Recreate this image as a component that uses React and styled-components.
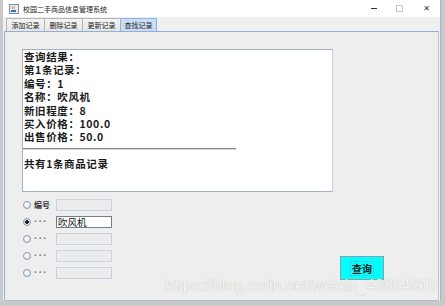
import React from 'react';
import styled, { createGlobalStyle } from 'styled-components';

const GlobalStyle = createGlobalStyle`
  html, body {
    margin: 0;
    padding: 0;
    background: #c9c9c9;
    font-family: "Noto Sans CJK SC", "Liberation Sans", sans-serif;
  }
  body {
    width: 445px;
    height: 306px;
    overflow: hidden;
  }
`;

const resultLines = [
  '查询结果：',
  '第1条记录：',
  '编号：1',
  '名称：吹风机',
  '新旧程度：8',
  '买入价格：100.0',
  '出售价格：50.0',
];

const options = [
  { label: '编号', value: '', checked: false },
  { label: '···', value: '吹风机', checked: true },
  { label: '···', value: '', checked: false },
  { label: '···', value: '', checked: false },
  { label: '···', value: '', checked: false },
];

const tabs = ['添加记录', '删除记录', '更新记录', '查找记录'];

function JavaIcon() {
  return (
    <svg width="10" height="10" viewBox="0 0 10 10">
      <rect x="0.5" y="0.5" width="9" height="9" fill="#e9eef5" stroke="#7d8ea3" />
      <path d="M3 2 C4 3 2 4 4 5 M5 2 C6 3 4 4 6 5" stroke="#d8701c" fill="none" strokeWidth="0.8" />
      <path d="M2 6 H7 V8 H2 Z" fill="#3c6fb0" />
    </svg>
  );
}

export default function App() {
  return (
    <>
      <GlobalStyle />
      <Window>
        <TitleBar>
          <TitleIcon><JavaIcon /></TitleIcon>
          <Title>校园二手商品信息管理系统</Title>
          <Controls>
            <Minimize />
            <Maximize />
            <Close>✕</Close>
          </Controls>
        </TitleBar>

        <TabStrip>
          {tabs.map((t, i) => (
            <Tab key={t} active={i === 3}>{t}</Tab>
          ))}
        </TabStrip>

        <TabPanel>
          <ResultBox>
            {resultLines.map((line) => (
              <ResultLine key={line}>{line}</ResultLine>
            ))}
            <Separator />
            <ResultLine>共有1条商品记录</ResultLine>
          </ResultBox>

          <Bottom>
            <OptionList>
              {options.map((o, i) => (
                <OptionRow key={i}>
                  <Radio checked={o.checked} />
                  <OptionLabel dots={o.label === '···'}>{o.label}</OptionLabel>
                  <Field active={o.checked}>{o.value}</Field>
                </OptionRow>
              ))}
            </OptionList>
            <QueryButton>
              <FocusRing>查询</FocusRing>
            </QueryButton>
          </Bottom>

          <Watermark>https://blog.csdn.net/weixin_43894818</Watermark>
        </TabPanel>
      </Window>
    </>
  );
}

// window frame
const Window = styled.div`
  margin-left: 3px;
  width: 438px;
  height: 301px;
  background: #f0f0f0;
  display: flex;
  flex-direction: column;
  box-sizing: border-box;
  padding: 0 1px 0 1px;
  border-right: 1px solid #a8b4c4;
`;

const TitleBar = styled.div`
  height: 17px;
  margin: 0 -1px;
  background: #ffffff;
  display: flex;
  align-items: center;
  padding-left: 6px;
`;

const TitleIcon = styled.div`
  width: 10px;
  height: 10px;
  display: flex;
`;

const Title = styled.span`
  margin-left: 4px;
  font-size: 7px;
  color: #222;
`;

const Controls = styled.div`
  margin-left: auto;
  display: flex;
  align-items: center;
  height: 100%;
`;

const Minimize = styled.div`
  width: 6px;
  height: 1px;
  background: #333;
  margin-right: 19px;
`;

const Maximize = styled.div`
  width: 5px;
  height: 5px;
  border: 1px solid #c8c8c8;
  margin-right: 20px;
`;

const Close = styled.span`
  font-family: "DejaVu Sans", sans-serif;
  font-size: 8px;
  color: #333;
  margin-right: 10px;
`;

// tabs
const TabStrip = styled.div`
  height: 14px;
  display: flex;
  align-items: flex-end;
  padding-left: 2px;
`;

const Tab = styled.div`
  height: 13px;
  box-sizing: border-box;
  width: ${(p) => (p.active ? '37px' : '39px')};
  margin-right: -1px;
  display: flex;
  align-items: center;
  justify-content: center;
  font-size: 7px;
  color: #222;
  border: 1px solid ${(p) => (p.active ? '#8db2e3' : '#b4b4b4')};
  border-bottom: none;
  background: ${(p) => (p.active ? '#c9ddf3' : 'linear-gradient(#f4f4f4, #e6e6e6)')};
`;

const TabPanel = styled.div`
  position: relative;
  flex: 1;
  background: #eeeeee;
  border: 1px solid #90b0d8;
  border-right-color: #b9c8da;
  border-bottom-color: #b0bccc;
  padding: 17px 0 0 17px;
  display: flex;
  flex-direction: column;
`;

// result text area
const ResultBox = styled.div`
  width: 311px;
  height: 143px;
  box-sizing: border-box;
  background: #ffffff;
  border: 1px solid #a3b0c0;
  border-right-color: #c7d0dc;
  padding: 0 0 0 1px;
  font-family: "Noto Sans CJK SC", "Liberation Sans", sans-serif;
  font-weight: 700;
  font-size: 10.5px;
  color: #1a1a1a;
`;

const ResultLine = styled.div`
  height: 13.4px;
  line-height: 13.4px;
  white-space: nowrap;
  letter-spacing: 0.6px;
`;

const Separator = styled.div`
  width: 212px;
  height: 13.4px;
  box-sizing: border-box;
  position: relative;
  &::after {
    content: '';
    position: absolute;
    left: -1px;
    right: 0;
    top: 4px;
    border-top: 1px solid #8a8a8a;
    border-bottom: 1px solid #d8d8d8;
  }
`;

// options and button
const Bottom = styled.div`
  display: flex;
  align-items: flex-end;
  margin-top: 4px;
`;

const OptionList = styled.div`
  display: flex;
  flex-direction: column;
`;

const OptionRow = styled.div`
  height: 17px;
  display: flex;
  align-items: center;
`;

const Radio = styled.div`
  width: 8px;
  height: 8px;
  margin-left: 1px;
  box-sizing: border-box;
  border-radius: 50%;
  border: 1px solid #8797ab;
  background: ${(p) =>
    p.checked
      ? 'radial-gradient(circle, #222 0 1.6px, #e4e8ee 2px)'
      : 'radial-gradient(circle at 40% 35%, #ffffff, #d7dde6)'};
`;

const OptionLabel = styled.span`
  width: 22px;
  margin-left: 3px;
  font-family: ${(p) => (p.dots ? '"Liberation Sans", sans-serif' : '"Noto Sans CJK SC", sans-serif')};
  font-size: ${(p) => (p.dots ? '10px' : '8px')};
  font-weight: 700;
  color: ${(p) => (p.dots ? '#7a7a7a' : '#333')};
  letter-spacing: ${(p) => (p.dots ? '1.3px' : '0')};
  line-height: 1;
`;

const Field = styled.div`
  width: 56px;
  height: 12px;
  box-sizing: border-box;
  border: 1px solid ${(p) => (p.active ? '#6f7f8f' : '#c6d3e2')};
  background: ${(p) => (p.active ? '#ffffff' : '#ececec')};
  font-size: 9.5px;
  line-height: 10px;
  padding-left: 1px;
  color: #111;
  white-space: nowrap;
`;

const QueryButton = styled.div`
  margin-left: 228px;
  margin-bottom: 1px;
  width: 44px;
  height: 24px;
  box-sizing: border-box;
  background: #00ffff;
  border: 1px solid #8aa0ac;
  display: flex;
  align-items: center;
  justify-content: center;
`;

const FocusRing = styled.span`
  font-size: 10px;
  font-weight: 700;
  color: #1a1a1a;
  line-height: 11px;
  padding: 1px 1px;
  outline: 1px dotted #7aa6b2;
`;

const Watermark = styled.div`
  position: absolute;
  left: 160px;
  top: 245px;
  font-family: "Liberation Sans", Arial, sans-serif;
  font-size: 16px;
  color: rgba(255, 255, 255, 0.9);
  text-shadow: 0 0 1px rgba(110, 110, 110, 0.55);
  white-space: nowrap;
`;
